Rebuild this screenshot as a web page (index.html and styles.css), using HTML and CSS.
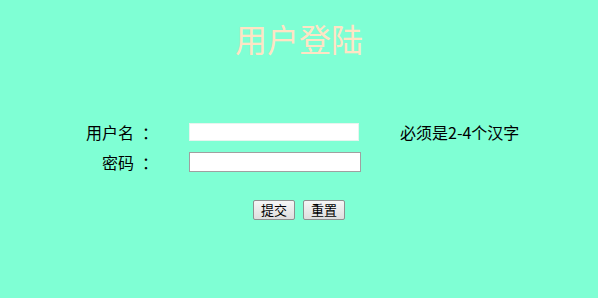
FILE: index.html
```html
<!DOCTYPE html>
<html lang="zh">
<head>
<meta charset="utf-8">
<title>用户登陆</title>
<link rel="stylesheet" href="styles.css">
</head>
<body>
<div class="page">
  <h1 class="title">用户登陆</h1>
  <form class="form">
    <div class="row">
      <label class="label">用户名<span class="colon">：</span></label>
      <input class="field field-first" type="text">
      <span class="hint">必须是2-4个汉字</span>
    </div>
    <div class="row">
      <label class="label">密码<span class="colon">：</span></label>
      <input class="field" type="password">
      <span class="hint"></span>
    </div>
    <div class="actions">
      <button class="btn" type="submit">提交</button>
      <button class="btn" type="reset">重置</button>
    </div>
  </form>
</div>
</body>
</html>
```

FILE: styles.css
```css
html, body {
  margin: 0;
  padding: 0;
  background: #7fffd4;
}
.page {
  width: 598px;
  height: 298px;
  font-family: "Noto Sans CJK SC", sans-serif;
  font-size: 16px;
  color: #000;
}
.title {
  margin: 0;
  padding-top: 16px;
  height: 44px;
  line-height: 44px;
  text-align: center;
  font-size: 32px;
  font-weight: normal;
  color: #ffe4c4;
  font-family: "Noto Sans CJK SC", serif;
}
.form {
  margin: 62px 0 0 0;
  display: flex;
  flex-direction: column;
}
.row {
  display: grid;
  grid-template-columns: 150px 212px auto;
  align-items: center;
  height: 20px;
  margin-bottom: 10px;
}
.label {
  text-align: right;
  line-height: 20px;
  white-space: nowrap;
}
.colon {
  display: inline-block;
  width: 16px;
  padding-left: 8px;
  box-sizing: border-box;
  white-space: nowrap;
  overflow: visible;
  text-align: left;
}
.field {
  margin-left: 39px;
  width: 172px;
  height: 20px;
  box-sizing: border-box;
  border: 1px solid #a0a0a0;
  background: #fff;
  padding: 0 2px;
}
.field-first {
  width: 170px;
  height: 18px;
  border-color: #e6f5ef;
}
.hint {
  margin-left: 38px;
  line-height: 20px;
  white-space: nowrap;
}
.actions {
  display: flex;
  justify-content: center;
  gap: 8px;
  margin-top: 18px;
}
.btn {
  width: 42px;
  height: 20px;
  padding: 0;
  font-family: "Noto Sans CJK SC", sans-serif;
  font-size: 13px;
  line-height: 18px;
  border: 1px solid #8e8f8f;
  border-radius: 2px;
  background: linear-gradient(#f6f6f6, #dedede);
  color: #000;
}
```
